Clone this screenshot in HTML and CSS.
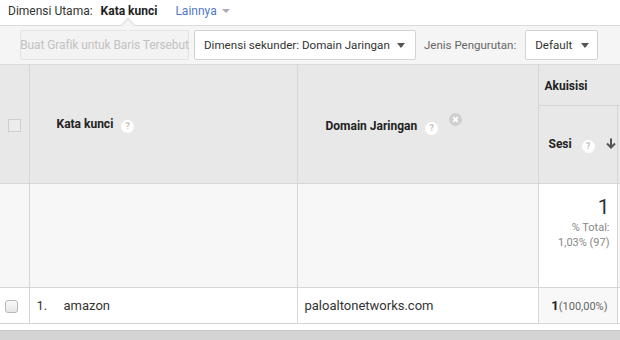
FILE: index.html
```html
<!DOCTYPE html>
<html>
<head>
<meta charset="utf-8">
<link rel="stylesheet" href="styles.css">
</head>
<body>
<div class="primary">
  <span class="lbl">Dimensi Utama:</span>
  <span class="cur">Kata kunci<span class="notch"></span></span>
  <span class="more">Lainnya <span class="caret-s"></span></span>
</div>
<div class="toolbar">
  <button class="btn disabled">Buat Grafik untuk Baris Tersebut</button>
  <button class="btn sec">Dimensi sekunder: Domain Jaringan <span class="caret"></span></button>
  <span class="sortlbl">Jenis Pengurutan:</span>
  <button class="btn def">Default<span class="caret"></span></button>
</div>
<table class="grid">
  <colgroup>
    <col class="c-chk"><col class="c-kw"><col class="c-dom"><col class="c-ses"><col class="c-x">
  </colgroup>
  <thead>
    <tr class="h1">
      <th rowspan="2" class="chkcell"><span class="cb"></span></th>
      <th rowspan="2" class="lft"><span class="hd">Kata kunci</span><span class="q">?</span></th>
      <th rowspan="2" class="lft dom"><span class="hd">Domain Jaringan</span><span class="q">?</span><span class="xc"><svg width="13" height="13" viewBox="0 0 13 13"><circle cx="6.5" cy="6.5" r="6.5" fill="#cfcfcf"/><path d="M4.2 4.2L8.8 8.8M8.8 4.2L4.2 8.8" stroke="#fff" stroke-width="1.8"/></svg></span></th>
      <th colspan="2" class="grp"><span class="hd">Akuisisi</span></th>
    </tr>
    <tr class="h2">
      <th class="ses"><span class="hd">Sesi</span><span class="q">?</span><svg class="arr" width="10" height="11" viewBox="0 0 10 11"><path d="M5 0.5V9.5M1 5.5L5 9.5L9 5.5" stroke="#555" stroke-width="2" fill="none"/></svg></th>
      <th class="xh"></th>
    </tr>
  </thead>
  <tbody>
    <tr class="tot">
      <td class="chkcell"></td>
      <td></td>
      <td></td>
      <td class="num"><div class="big">1</div><div class="pct">% Total:<br>1,03% (97)</div></td>
      <td></td>
    </tr>
    <tr class="row">
      <td class="chkcell"><span class="cb2"></span></td>
      <td><span class="idx">1.</span>amazon</td>
      <td>paloaltonetworks.com</td>
      <td class="val"><b>1</b><span class="share">(100,00%)</span></td>
      <td></td>
    </tr>
  </tbody>
</table>
<div class="footer"></div>
</body>
</html>
```

FILE: styles.css
```css
* { box-sizing: border-box; }
html, body { margin: 0; padding: 0; }
body {
  width: 620px; height: 340px; overflow: hidden; background: #fff;
  font-family: Roboto, "Liberation Sans", Arial, sans-serif; color: #333;
}
.primary {
  height: 25px; display: flex; align-items: center; padding: 0 0 4px 8px;
  font-size: 12px;
}
.primary .lbl { color: #333; }
.primary .cur { font-weight: bold; color: #222; margin-left: 8px; position: relative; }
.notch {
  position: absolute; left: 22px; top: 16px; width: 10px; height: 10px;
  background: #f5f5f5; border-top: 1px solid #dcdcdc; border-left: 1px solid #dcdcdc;
  transform: rotate(45deg);
}
.primary .more { color: #4f78c4; margin-left: 18px; display: flex; align-items: center; }
.caret-s {
  display: inline-block; margin-left: 5px; width: 0; height: 0;
  border-left: 4px solid transparent; border-right: 4px solid transparent; border-top: 4px solid #aab;
}
.toolbar {
  height: 39px; background: #f5f5f5; border-top: 1px solid #dcdcdc;
  display: flex; align-items: center; padding: 0 0 0 20px;
}
.btn {
  font-family: Roboto, "Liberation Sans", Arial, sans-serif; font-size: 12px;
  height: 30px; border: 1px solid #d3d3d3; border-radius: 2px; background: #fff;
  color: #333; padding: 0 9px; display: flex; align-items: center; justify-content: flex-start;
  white-space: nowrap; flex: none;
}
.btn.disabled { color: #c2c2c2; background: #f3f3f3; border-color: #e3e3e3; width: 169px; padding: 0; justify-content: center; letter-spacing: -0.1px; }
.btn.sec { margin-left: 5px; width: 222px; padding: 0 10px 0 9px; font-size: 11.6px; }
.btn.sec .caret { margin-left: auto; }
.btn.def { padding: 0 8px 0 9px; font-size: 11.6px; }
.btn.def .caret { margin-left: 9px; }
.caret {
  display: inline-block; width: 0; height: 0;
  border-left: 4px solid transparent; border-right: 4px solid transparent; border-top: 5px solid #555;
}
.sortlbl { color: #666; font-size: 11.5px; margin: 0 9px 0 8px; white-space: nowrap; }
.grid {
  border-collapse: collapse; table-layout: fixed; width: 630px;
  font-size: 13px;
}
.c-chk { width: 29px; } .c-kw { width: 268px; } .c-dom { width: 241px; } .c-ses { width: 79px; } .c-x { width: 13px; }
.grid th, .grid td { border: 1px solid #d6d6d6; padding: 0; }
.grid thead th { background: #e8e8e8; font-weight: normal; text-align: left; vertical-align: middle; }
.grid thead tr:first-child th { border-top: 1px solid #dcdcdc; }
.h1 { height: 41px; }
.h2 { height: 78px; }
.hd { font-weight: bold; font-size: 12px; color: #222; }
.grid .chkcell { text-align: center; border-left: none; }
.cb { display: inline-block; width: 13px; height: 13px; border: 1px solid #cfcfcf; background: #ececec; vertical-align: middle; }
.grid th.lft { padding-left: 27px; }
.grid th.dom { padding-left: 28px; }
.q {
  display: inline-block; width: 13px; height: 13px; border-radius: 50%; background: #fff;
  color: #c4c4c4; font-size: 9px; font-weight: bold; text-align: center; line-height: 13px;
  margin-left: 8px; vertical-align: -1px;
}
.xc { display: inline-block; margin-left: 11px; vertical-align: 4px; }
.xc svg { display: block; }
.grid th.grp { padding-left: 6px; }
.grid th.ses { padding-left: 10px; white-space: nowrap; }
.ses .q { margin-left: 10px; }
.arr { margin-left: 11px; vertical-align: -1px; }
.tot { height: 104px; }
.tot td { background: #f7f7f7; }
.grid .tot td.num { background: #fff; text-align: right; vertical-align: top; padding: 12px 7px 0 0; }
.big { font-size: 21px; color: #333; line-height: 22px; }
.pct { font-size: 11px; color: #888; line-height: 15px; margin-top: 2px; }
.row { height: 36px; }
.grid .row td { background: #fff; color: #333; padding-left: 7px; }
.grid .row td.chkcell { text-align: left; padding-left: 5px; }
.cb2 { display: inline-block; width: 13px; height: 13px; border: 1px solid #b8b8b8; border-radius: 3px; background: linear-gradient(#fafafa, #e6e6e6); vertical-align: middle; }
.idx { display: inline-block; width: 27px; }
.grid .row td.val { background: #f8f8f8; text-align: right; padding: 0 9px 0 0; white-space: nowrap; }
.val b { font-size: 13px; color: #222; }
.share { font-size: 11px; color: #666; }
.footer { height: 11px; margin-top: 6px; background: #d4d4d4; border-top: 1px solid #c8c8c8; }
```
